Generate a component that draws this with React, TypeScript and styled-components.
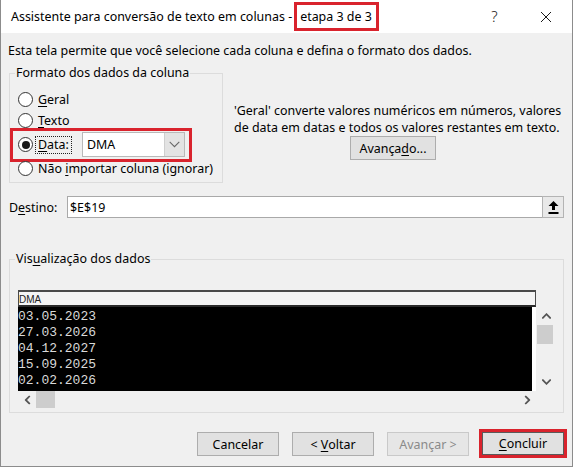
import React from "react";
import styled, { createGlobalStyle } from "styled-components";

const GlobalStyle = createGlobalStyle`
  html, body {
    margin: 0;
    padding: 0;
    background: #f0f0f0;
  }
  body {
    font-family: "Noto Sans", "Segoe UI", sans-serif;
    font-size: 12.45px;
    color: #000;
  }
  * {
    box-sizing: border-box;
  }
`;

const MARK_RED = "#d9232d";

const Window = styled.div`
  width: 573px;
  height: 467px;
  border: 1px solid #8c8c8c;
  border-top: none;
  background: #f0f0f0;
  display: flex;
  flex-direction: column;
  overflow: hidden;
`;

const TitleBar = styled.div`
  height: 33px;
  flex: none;
  background: #fff;
  display: flex;
  align-items: center;
  padding-left: 10px;
  padding-right: 1px;
`;

const Title = styled.div`
  display: flex;
  align-items: center;
  white-space: pre;
  line-height: 16px;
`;

const StepMark = styled.span`
  display: inline-flex;
  align-items: center;
  height: 29px;
  margin-left: 2px;
  padding: 0 4px 0 3px;
  border: 3px solid ${MARK_RED};
`;

const TitleButtons = styled.div`
  margin-left: auto;
  display: flex;
`;

const TitleButton = styled.div`
  width: 51px;
  height: 33px;
  display: flex;
  align-items: center;
  justify-content: center;
`;

const HelpGlyph = styled.span`
  font-size: 15px;
  font-weight: 300;
  line-height: 1;
  color: #1a1a1a;
`;

const Body = styled.div`
  flex: 1;
  display: flex;
  flex-direction: column;
  padding: 0 8px;
`;

const Intro = styled.p`
  margin: 10px 0 0 -1px;
  line-height: 16px;
  white-space: nowrap;
`;

const TopRow = styled.div`
  display: flex;
  margin-top: 7px;
`;

const GroupBox = styled.fieldset<{ $width?: number; $padTop: number }>`
  margin: 0;
  min-width: 0;
  flex: none;
  width: ${(p) => (p.$width ? `${p.$width}px` : "auto")};
  padding: ${(p) => p.$padTop}px 0 3px 8px;
  border: 1px solid #dcdcdc;
`;

const GroupTitle = styled.legend`
  margin-left: -3px;
  padding: 0 1px;
  line-height: 14px;
  white-space: nowrap;
`;

const Key = styled.span`
  text-decoration: underline;
  text-underline-offset: 2px;
  text-decoration-thickness: 1px;
`;

const RadioList = styled.div`
  display: flex;
  flex-direction: column;
`;

const RadioRow = styled.div<{ $h: number; $marked?: boolean }>`
  position: relative;
  height: ${(p) => p.$h}px;
  width: 167px;
  display: flex;
  align-items: center;
  gap: 5px;
  white-space: nowrap;

  ${(p) =>
    p.$marked &&
    `
    &::after {
      content: "";
      position: absolute;
      left: -8px;
      right: -7px;
      top: -3px;
      bottom: -4px;
      border: 3px solid ${MARK_RED};
      pointer-events: none;
    }
  `}
`;

const Radio = styled.span<{ $checked?: boolean }>`
  flex: none;
  width: 15px;
  height: 15px;
  border-radius: 50%;
  border: 1px solid #333;
  background: #fff;
  display: flex;
  align-items: center;
  justify-content: center;

  &::after {
    content: "";
    width: 8px;
    height: 8px;
    border-radius: 50%;
    background: ${(p) => (p.$checked ? "#1a1a1a" : "transparent")};
  }
`;

const FocusLabel = styled.span`
  outline: 1px dotted #222;
  outline-offset: 0;
  padding: 0 2px;
  margin-left: -2px;
  line-height: 16px;
`;

const Select = styled.div`
  margin-left: auto;
  width: 103px;
  height: 25px;
  display: flex;
  background: #fff;
  border: 1px solid #b9b9b9;
`;

const SelectValue = styled.span`
  flex: 1;
  display: flex;
  align-items: center;
  padding-left: 4px;
`;

const SelectArrow = styled.span`
  width: 20px;
  display: flex;
  align-items: center;
  justify-content: center;
  background: #e3e3e3;
  border-left: 1px solid #cfcfcf;
`;

const InfoColumn = styled.div`
  flex: 1;
  min-width: 0;
  margin-left: 11px;
  padding-top: 36px;
  display: flex;
  flex-direction: column;
  align-items: flex-start;
`;

const InfoLine = styled.span`
  display: block;
  line-height: 17px;
  white-space: nowrap;
`;

const InfoActions = styled.div`
  align-self: stretch;
  display: flex;
  justify-content: center;
  padding-right: 12px;
  margin-top: 0;
`;

const Button = styled.div<{ $w: number; $disabled?: boolean; $marked?: boolean }>`
  width: ${(p) => p.$w}px;
  height: ${(p) => (p.$marked ? 23 : 24)}px;
  display: flex;
  align-items: center;
  justify-content: center;
  background: ${(p) => (p.$disabled ? "#e6e6e6" : "#e1e1e1")};
  border: 1px solid ${(p) => (p.$disabled ? "#c9c9c9" : p.$marked ? "#5a5a5a" : "#adadad")};
  color: ${(p) => (p.$disabled ? "#8a8a8a" : "#000")};
  white-space: pre;
  ${(p) => p.$marked && `outline: 3px solid ${MARK_RED}; outline-offset: 0;`}
`;

const DestRow = styled.div`
  display: flex;
  align-items: center;
  margin-top: 13px;
  height: 22px;
`;

const DestLabel = styled.span`
  width: 58px;
  flex: none;
`;

const DestField = styled.div`
  flex: 1;
  height: 22px;
  display: flex;
  background: #fff;
  border: 1px solid #a9a9a9;
`;

const DestValue = styled.span`
  flex: 1;
  display: flex;
  align-items: center;
  padding-left: 2px;
`;

const CollapseButton = styled.span`
  width: 22px;
  display: flex;
  align-items: center;
  justify-content: center;
  background: #e9e9e9;
  border: 1px solid #b4b4b4;
  margin: -1px -1px -1px 0;
`;

const PreviewBox = styled(GroupBox)`
  margin-top: 34px;
`;

const PreviewGrid = styled.div`
  display: grid;
  grid-template-columns: 518px 18px;
  grid-template-rows: 17px 84px 18px;
  column-gap: 1px;
`;

const ColumnHeader = styled.div`
  grid-column: 1;
  grid-row: 1;
  background: #f4f4f4;
  border: 1px solid #4a4a4a;
  border-top-width: 2px;
  border-bottom: 2px solid #2a2a2a;
  display: flex;
  align-items: flex-end;
  font-family: "Liberation Sans", Arial, sans-serif;
  font-size: 10px;
  line-height: 10px;
  color: #222;
`;

const DataArea = styled.div`
  grid-column: 1;
  grid-row: 2;
  background: #000;
  border-right: 4px solid #fff;
  padding-top: 2px;
  display: flex;
  flex-direction: column;
`;

const DataRow = styled.span`
  height: 16px;
  line-height: 16px;
  font-family: "Liberation Mono", "Courier New", monospace;
  font-size: 13px;
  color: #d9d9d9;
`;

const VScroll = styled.div`
  grid-column: 2;
  grid-row: 2;
  display: flex;
  flex-direction: column;
`;

const HScroll = styled.div`
  grid-column: 1;
  grid-row: 3;
  display: flex;
`;

const ScrollArrow = styled.span`
  flex: none;
  width: 18px;
  height: 18px;
  display: flex;
  align-items: center;
  justify-content: center;
`;

const ScrollThumb = styled.span<{ $horizontal?: boolean }>`
  flex: none;
  background: #cdcdcd;
  ${(p) => (p.$horizontal ? "width: 19px; height: 17px;" : "height: 19px; width: 16px;")}
`;

const ScrollTrack = styled.span`
  flex: 1;
`;

const ButtonRow = styled.div`
  display: flex;
  justify-content: flex-end;
  gap: 13px;
  margin-top: 19px;
`;

const Chevron = ({ dir, color = "#555", thin = false }: { dir: "up" | "down" | "left" | "right"; color?: string; thin?: boolean }) => {
  const rot = { down: 0, up: 180, left: 90, right: -90 }[dir];
  return (
    <svg width={thin ? 11 : 9} height={thin ? 7 : 6} viewBox="0 0 10 6" style={{ transform: `rotate(${rot}deg)` }}>
      <polyline
        points="1,1 5,5 9,1"
        fill="none"
        stroke={color}
        strokeWidth={thin ? 1 : 2}
        strokeLinecap="square"
      />
    </svg>
  );
};

const CloseIcon = () => (
  <svg width="12" height="12" viewBox="0 0 12 12">
    <path d="M1 1 L11 11 M11 1 L1 11" stroke="#1a1a1a" strokeWidth="1" fill="none" />
  </svg>
);

const UploadIcon = () => (
  <svg width="11" height="13" viewBox="0 0 11 13">
    <path d="M5.5 0 L10.5 5 L7 5 L7 9 L4 9 L4 5 L0.5 5 Z" fill="#000" />
    <rect x="0.5" y="11" width="10" height="2" fill="#000" />
  </svg>
);

const dates = ["03.05.2023", "27.03.2026", "04.12.2027", "15.09.2025", "02.02.2026"];

export default function App() {
  return (
    <>
      <GlobalStyle />
      <Window>
        <TitleBar>
          <Title>
            Assistente para conversão de texto em colunas -<StepMark>etapa 3 de 3</StepMark>
          </Title>
          <TitleButtons>
            <TitleButton>
              <HelpGlyph>?</HelpGlyph>
            </TitleButton>
            <TitleButton>
              <CloseIcon />
            </TitleButton>
          </TitleButtons>
        </TitleBar>

        <Body>
          <Intro>Esta tela permite que você selecione cada coluna e defina o formato dos dados.</Intro>

          <TopRow>
            <GroupBox $width={214} $padTop={9}>
              <GroupTitle>Formato dos dados da coluna</GroupTitle>
              <RadioList>
                <RadioRow $h={21}>
                  <Radio />
                  <span>
                    <Key>G</Key>eral
                  </span>
                </RadioRow>
                <RadioRow $h={21}>
                  <Radio />
                  <span>
                    <Key>T</Key>exto
                  </span>
                </RadioRow>
                <RadioRow $h={27} $marked>
                  <Radio $checked />
                  <FocusLabel>
                    <Key>D</Key>ata:
                  </FocusLabel>
                  <Select>
                    <SelectValue>DMA</SelectValue>
                    <SelectArrow>
                      <Chevron dir="down" color="#666" thin />
                    </SelectArrow>
                  </Select>
                </RadioRow>
                <RadioRow $h={21}>
                  <Radio />
                  <span>
                    Não <Key>i</Key>mportar coluna (ignorar)
                  </span>
                </RadioRow>
              </RadioList>
            </GroupBox>

            <InfoColumn>
              <InfoLine>'Geral' converte valores numéricos em números, valores</InfoLine>
              <InfoLine>de data em datas e todos os valores restantes em texto.</InfoLine>
              <InfoActions>
                <Button $w={86}>
                  Avança<Key>d</Key>o...
                </Button>
              </InfoActions>
            </InfoColumn>
          </TopRow>

          <DestRow>
            <DestLabel>
              D<Key>e</Key>stino:
            </DestLabel>
            <DestField>
              <DestValue>$E$19</DestValue>
              <CollapseButton>
                <UploadIcon />
              </CollapseButton>
            </DestField>
          </DestRow>

          <PreviewBox $padTop={24}>
            <GroupTitle>
              Vis<Key>u</Key>alização dos dados
            </GroupTitle>
            <PreviewGrid>
              <ColumnHeader>DMA</ColumnHeader>
              <DataArea>
                {dates.map((d) => (
                  <DataRow key={d}>{d}</DataRow>
                ))}
              </DataArea>
              <VScroll>
                <ScrollArrow>
                  <Chevron dir="up" />
                </ScrollArrow>
                <ScrollThumb />
                <ScrollTrack />
                <ScrollArrow>
                  <Chevron dir="down" />
                </ScrollArrow>
              </VScroll>
              <HScroll>
                <ScrollArrow>
                  <Chevron dir="left" />
                </ScrollArrow>
                <ScrollThumb $horizontal />
                <ScrollTrack />
                <ScrollArrow>
                  <Chevron dir="right" />
                </ScrollArrow>
              </HScroll>
            </PreviewGrid>
          </PreviewBox>

          <ButtonRow>
            <Button $w={82}>Cancelar</Button>
            <Button $w={82}>
              {"< "}
              <Key>V</Key>oltar
            </Button>
            <Button $w={82} $disabled>
              {"Avançar >"}
            </Button>
            <Button $w={82} $marked>
              <Key>C</Key>oncluir
            </Button>
          </ButtonRow>
        </Body>
      </Window>
    </>
  );
}
